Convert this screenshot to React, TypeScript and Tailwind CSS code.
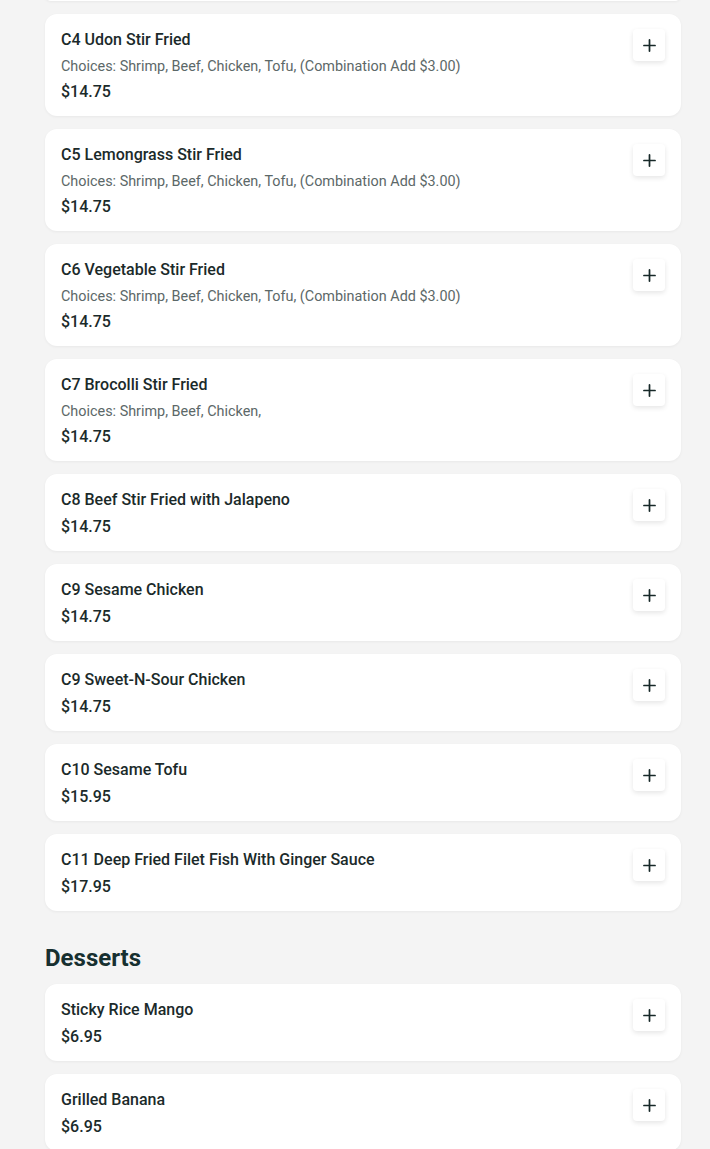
import React from "react";
import { Plus } from "lucide-react";

type Item = { name: string; desc?: string; price: string };

const CHOICES = "Choices: Shrimp, Beef, Chicken, Tofu, (Combination Add $3.00)";

const ENTREES: Item[] = [
  { name: "C4 Udon Stir Fried", desc: CHOICES, price: "$14.75" },
  { name: "C5 Lemongrass Stir Fried", desc: CHOICES, price: "$14.75" },
  { name: "C6 Vegetable Stir Fried", desc: CHOICES, price: "$14.75" },
  { name: "C7 Brocolli Stir Fried", desc: "Choices: Shrimp, Beef, Chicken,", price: "$14.75" },
  { name: "C8 Beef Stir Fried with Jalapeno", price: "$14.75" },
  { name: "C9 Sesame Chicken", price: "$14.75" },
  { name: "C9 Sweet-N-Sour Chicken", price: "$14.75" },
  { name: "C10 Sesame Tofu", price: "$15.95" },
  { name: "C11 Deep Fried Filet Fish With Ginger Sauce", price: "$17.95" },
];

const DESSERTS: Item[] = [
  { name: "Sticky Rice Mango", price: "$6.95" },
  { name: "Grilled Banana", price: "$6.95" },
];

const MenuCard = ({ item }: { item: Item }) => (
  <div className="bg-white rounded-xl shadow-[0_1px_3px_rgba(0,0,0,0.05)] px-4 pt-[15px] pb-[13px] flex items-start justify-between">
    <div className="flex flex-col">
      <p className="text-[16px] leading-[22px] font-medium text-[#1b2a2a]">{item.name}</p>
      {item.desc && (
        <p className="mt-[5px] text-[14.4px] leading-[22px] text-[#5c6868]">{item.desc}</p>
      )}
      <p
        className={`${item.desc ? "mt-[3px]" : "mt-[5px]"} text-[16px] leading-[22px] font-medium text-[#1b2a2a]`}
      >
        {item.price}
      </p>
    </div>
    <button
      type="button"
      className="w-8 h-8 shrink-0 rounded-[4px] bg-white shadow-[0_2px_5px_rgba(0,0,0,0.1)] flex items-center justify-center text-[#172828]"
    >
      <Plus className="w-[19px] h-[19px]" strokeWidth={2.2} />
    </button>
  </div>
);

export default function App() {
  return (
    <div
      className="min-h-screen bg-[#f4f4f4] pl-[45px] pr-[29px] pb-6"
      style={{ fontFamily: "Roboto, 'Noto Sans', sans-serif" }}
    >
      <div className="flex flex-col gap-[13px] -mt-[11px]">
        <div className="bg-white rounded-xl h-[12px] shadow-[0_1px_3px_rgba(0,0,0,0.05)]" />
        {ENTREES.map((item) => (
          <MenuCard key={item.name} item={item} />
        ))}
      </div>
      <h2 className="mt-[31px] mb-[10px] text-[24px] leading-[32px] font-bold text-[#173030]">
        Desserts
      </h2>
      <div className="flex flex-col gap-[13px]">
        {DESSERTS.map((item) => (
          <MenuCard key={item.name} item={item} />
        ))}
      </div>
    </div>
  );
}
